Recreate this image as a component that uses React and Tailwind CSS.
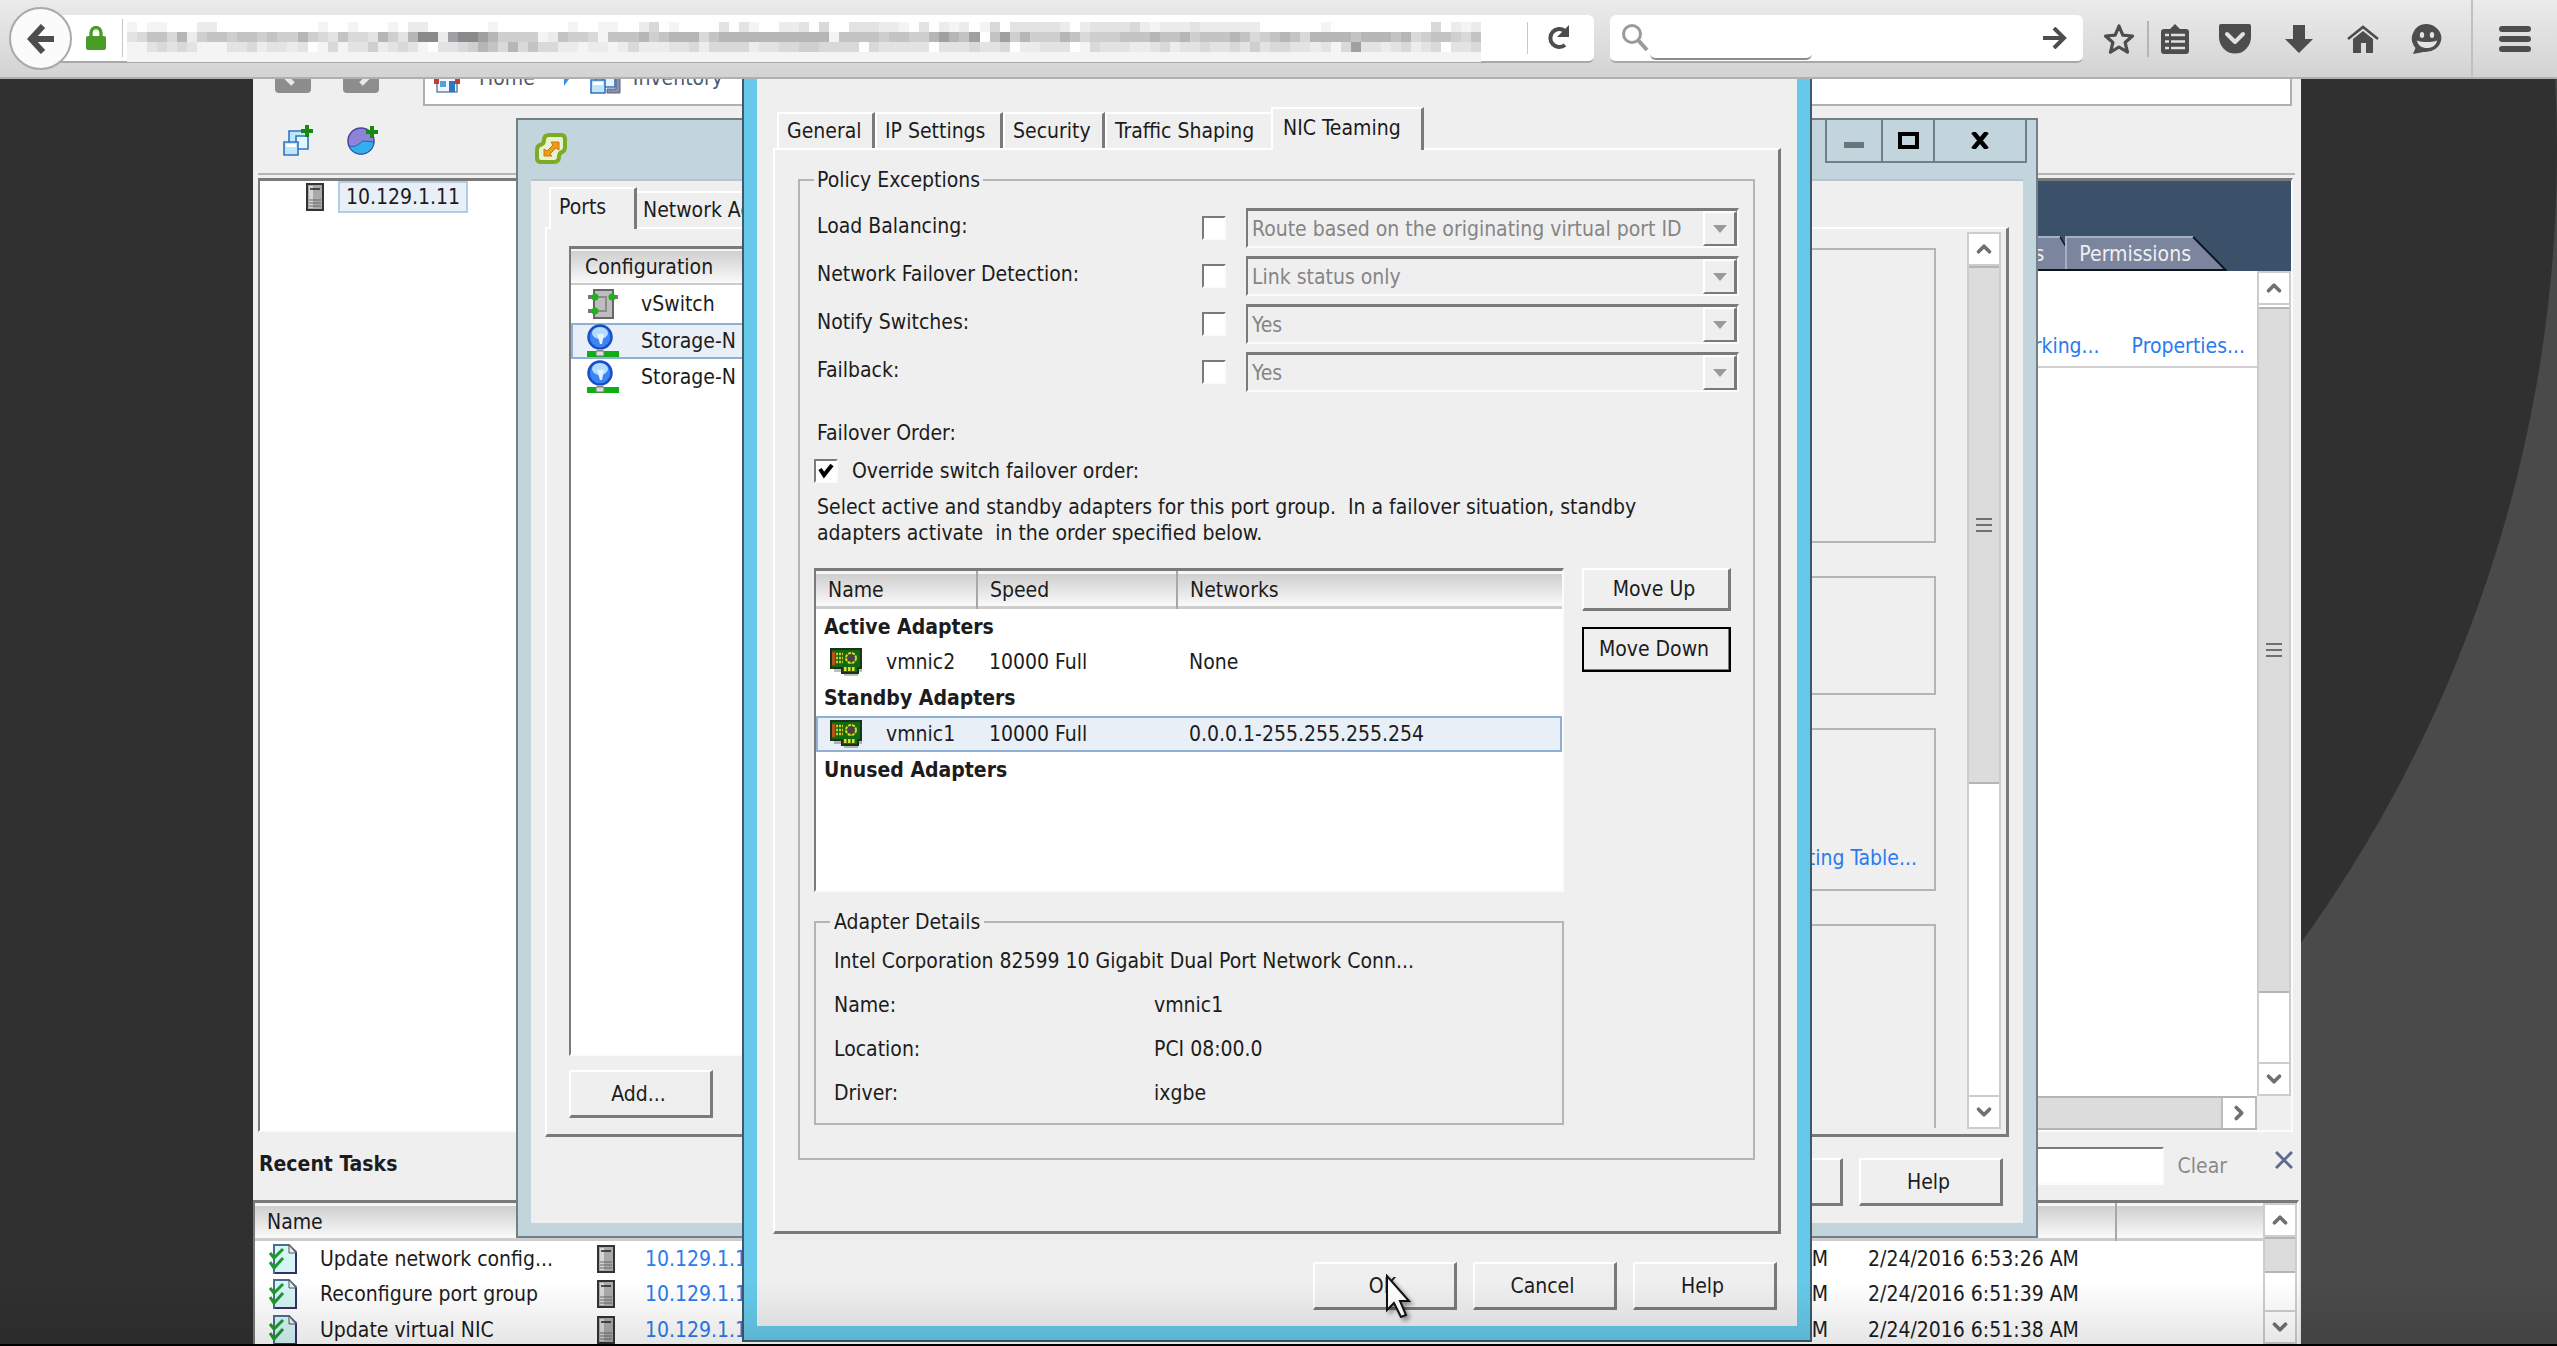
import { ChevronDown, ChevronRight, ChevronUp } from "lucide-react";
import clsx from "clsx";

const FONT = "font-['DejaVu_Sans_Condensed','Noto_Sans',sans-serif]";
const RAISED =
  "border-2 border-t-white border-l-white border-r-[#7a7a7a] border-b-[#7a7a7a]";
const SUNKEN =
  "border-2 border-t-[#7a7a7a] border-l-[#7a7a7a] border-r-[#fbfbfb] border-b-[#fbfbfb]";
const HEADER =
  "bg-linear-to-b from-[#cfcfcf] to-[#fafafa] border-t-2 border-t-[#f4f4f4] border-b-2 border-b-[#cccccc]";

const policies = [
  { id: "load", label: "Load Balancing:", value: "Route based on the originating virtual port ID" },
  { id: "detect", label: "Network Failover Detection:", value: "Link status only" },
  { id: "notify", label: "Notify Switches:", value: "Yes" },
  { id: "failback", label: "Failback:", value: "Yes" },
];

const adapterGroups = [
  { name: "Active Adapters", rows: [{ name: "vmnic2", speed: "10000 Full", networks: "None" }] },
  {
    name: "Standby Adapters",
    rows: [
      { name: "vmnic1", speed: "10000 Full", networks: "0.0.0.1-255.255.255.254", selected: true },
    ],
  },
  { name: "Unused Adapters", rows: [] },
];

const details = [
  ["Name:", "vmnic1"],
  ["Location:", "PCI 08:00.0"],
  ["Driver:", "ixgbe"],
];

const tasks = [
  { name: "Update network config...", time: "2/24/2016 6:53:26 AM" },
  { name: "Reconfigure port group", time: "2/24/2016 6:51:39 AM" },
  { name: "Update virtual NIC", time: "2/24/2016 6:51:38 AM" },
];

// One digit per cell of the hidden address, 0 is blank and 9 is darkest
const mosaic = [
  "101100022000000000010010001022000000100000001001100240100003031002230400333221030212014033333202333342122232222220000001000000000040212322333331",
  "346647256656656557543644375379928998755551265541666756777467777777777716666566557876806857555764555666766756667645676477776777674566546653766520",
  "113434311133423323014133523431033457647464422122124222334244442334455444404333330333433402233301433322342334334353443323148332342340334233343332",
];
const shades = ["#fefefe", "#f4f4f4", "#ececec", "#e3e3e3", "#d9d9d9", "#cfcfcf", "#c4c4c4", "#b6b6b6", "#a0a0a4", "#8a8a8a"];

function Mosaic() {
  return (
    <svg className="h-10 w-full" viewBox="0 0 135 4" preserveAspectRatio="none" shapeRendering="crispEdges">
      <rect y="3" width="135" height="1" fill="#f4f4f4" />
      {mosaic.map((row, y) =>
        row
          .slice(0, 135)
          .split("")
          .map((n, x) => <rect key={`${x}-${y}`} x={x} y={y} width="1" height="1" fill={shades[n]} />)
      )}
    </svg>
  );
}

function BrowserBar() {
  return (
    <header className="relative z-10 flex h-[79px] shrink-0 items-center border-b-2 border-[#b0b0b0] bg-linear-to-b from-[#ebebeb] to-[#d3d3d3]">
      <button
        type="button"
        aria-label="Back"
        className="z-10 ml-[9px] flex size-[63px] shrink-0 items-center justify-center rounded-full border-2 border-[#a9a9a9] bg-[#fbfbfb]"
      >
        <svg viewBox="0 0 28 30" className="h-[30px] w-7" fill="none" stroke="#4d4d4d" strokeWidth="6">
          <path d="M27 15H5M16 2 4 15l12 13" />
        </svg>
      </button>
      <div className="-ml-8 flex h-12 min-w-0 flex-1 items-center rounded-r-md border-b-2 border-[#a8a8a8] bg-white pl-[46px]">
        <svg viewBox="0 0 20 24" className="h-6 w-5 shrink-0">
          <path d="M5 11V7a5 5.500 0 0 1 10 0v4" fill="none" stroke="#4a9c27" strokeWidth="3.400" />
          <rect y="10" width="20" height="14" rx="2" fill="#4a9c27" />
        </svg>
        <div className="ml-4 h-[38px] w-px bg-[#c8c8c8]" />
        <div className="relative ml-1 mt-2 h-10 min-w-0 flex-1">
          <input aria-label="Address" className="absolute inset-0 size-full bg-transparent" />
          <Mosaic />
        </div>
        <div className="ml-[46px] h-8 w-px bg-[#c8c8c8]" />
        <button type="button" aria-label="Reload" className="mr-6 ml-[18px] shrink-0">
          <svg viewBox="0 0 24 26" className="h-[26px] w-6">
            <path d="M19 20a9 9 0 1 1 0-14" fill="none" stroke="#4d4d4d" strokeWidth="4" />
            <path d="M23 0v12H11z" fill="#4d4d4d" />
          </svg>
        </button>
      </div>
      <div className="relative ml-4 flex h-12 w-[473px] shrink-0 items-center justify-between rounded-md border-b-2 border-[#a8a8a8] bg-white pr-4 pl-3">
        <svg viewBox="0 0 28 28" className="size-7" fill="none" stroke="#9a9a9a" strokeWidth="3">
          <circle cx="10" cy="10" r="8.500" />
          <path d="m16 16 9 10" strokeWidth="4" />
        </svg>
        <input aria-label="Search" className="h-11 w-[162px] rounded-b-md border-b-2 border-[#8a8a8a]" />
        <div className="flex-1" />
        <svg viewBox="0 0 24 22" className="h-[22px] w-6" fill="none" stroke="#4d4d4d" strokeWidth="4">
          <path d="M0 11h20M11 1l10 10-10 10" />
        </svg>
      </div>
      <svg viewBox="0 0 32 32" className="ml-5 size-8 shrink-0" fill="none" stroke="#4d4d4d" strokeWidth="3.200" strokeLinejoin="round">
        <path d="m16 3 3.800 9.200 9.700.8-7.400 6.500 2.400 9.700L16 24l-8.500 5.200 2.400-9.700L2.500 13l9.700-.8z" />
      </svg>
      <div className="ml-3 h-9 w-0.5 shrink-0 bg-[#b5b5b5]" />
      <svg viewBox="0 0 28 30" className="ml-3 h-[30px] w-7 shrink-0">
        <path d="M3 5h6l5-5 5 5h6a3 3 0 0 1 3 3v19a3 3 0 0 1-3 3H3a3 3 0 0 1-3-3V8a3 3 0 0 1 3-3z" fill="#4d4d4d" />
        <path d="M4 11h4M4 17.500h4M4 24h4M10 11h14M10 17.500h14M10 24h14" stroke="#e0e0e0" strokeWidth="2.400" />
      </svg>
      <svg viewBox="0 0 32 30" className="ml-[30px] h-[30px] w-8 shrink-0">
        <path d="M2 0h28a2 2 0 0 1 2 2v11a16 16.500 0 0 1-32 0V2a2 2 0 0 1 2-2z" fill="#4d4d4d" />
        <path d="m8 10 8 8 8-8" fill="none" stroke="#e2e2e2" strokeWidth="4" strokeLinecap="round" strokeLinejoin="round" />
      </svg>
      <svg viewBox="0 0 28 28" className="ml-[34px] size-7 shrink-0" fill="#4d4d4d">
        <path d="M8 0h12v14h8L14 28 0 14h8z" />
      </svg>
      <svg viewBox="0 0 32 28" className="ml-[34px] h-7 w-8 shrink-0">
        <path d="M1 14 16 2l15 12" fill="none" stroke="#4d4d4d" strokeWidth="2.600" />
        <path d="M6 14 16 6l10 8v14h-7V18h-5v10H6z" fill="#4d4d4d" />
      </svg>
      <svg viewBox="0 0 32 32" className="ml-8 size-8 shrink-0">
        <path d="M16 1a16 14 0 1 1-3.500 28L2 31l2.500-6A14.500 14.500 0 0 1 16 1z" fill="#4d4d4d" />
        <ellipse cx="11" cy="12" rx="2.200" ry="3" fill="#e2e2e2" />
        <ellipse cx="21" cy="12" rx="2.200" ry="3" fill="#e2e2e2" />
        <path d="M6 17.500c6 2 14 2 20 0-1 10-19 10-20 0z" fill="#e2e2e2" />
      </svg>
      <div className="ml-7 h-full w-0.5 shrink-0 bg-[#c0c0c0]" />
      <button type="button" aria-label="Open menu" className="mx-[26px] flex w-8 shrink-0 flex-col gap-1">
        <span className="h-1.5 rounded-full bg-[#4d4d4d]" />
        <span className="h-1.5 rounded-full bg-[#4d4d4d]" />
        <span className="h-1.5 rounded-full bg-[#4d4d4d]" />
      </button>
    </header>
  );
}

function ServerIcon({ className }) {
  return (
    <svg viewBox="0 0 18 28" className={clsx("h-7 w-[18px] shrink-0", className)}>
      <rect x="1" y="1" width="16" height="26" fill="#a9a9a9" stroke="#333" strokeWidth="2" />
      <path d="M3 3h4v22H3z" fill="#d6d6d6" />
      <path d="M4 6h10" stroke="#222" strokeWidth="1.500" />
      <path d="M3 17h12M3 20h12M3 23h12" stroke="#666" />
    </svg>
  );
}

function TaskIcon() {
  return (
    <svg viewBox="0 0 28 30" className="h-[30px] w-7 shrink-0">
      <path d="M5 1h15l7 7v21H5z" fill="#d5f6f6" stroke="#4c6c92" strokeWidth="2" />
      <path d="M27 9v20H6" fill="none" stroke="#35306a" strokeWidth="2" />
      <path d="M20 1v8h7z" fill="#eee" stroke="#555" />
      <path d="m1 9 4 5 9-9M1 18l4 6 9-10" fill="none" stroke="#1d9a2c" strokeWidth="3" />
    </svg>
  );
}

function CubesIcon({ plus }) {
  return (
    <svg viewBox="0 0 32 34" className="h-[34px] w-8 shrink-0">
      <g fill="#bfe6fb" stroke="#2f74c4" strokeWidth="1.600">
        <path d="M7 8h18v16H7z" />
        <path d="M14 13h12v13H14z" fill="#e3f5ff" />
        <path d="M2 19h14v13H2z" />
      </g>
      <path d="M4 21h10v3H4z" fill="#fff" />
      {plus && <path d="M25 2v12M19 8h12" stroke="#118c11" strokeWidth="4" />}
      {!plus && <path d="M27 8h4v24H18v-4h9z" fill="#8a8fa8" stroke="#5c6180" />}
    </svg>
  );
}

function PoolIcon() {
  return (
    <svg viewBox="0 0 32 32" className="size-8 shrink-0">
      <circle cx="15" cy="17" r="13" fill="#8d84d8" stroke="#4a469a" strokeWidth="1.500" />
      <path d="M3 22c6 2 10-2 14-5l11 1a13 13 0 0 1-25 4z" fill="#35aef0" stroke="#1d63b5" />
      <path d="M26 2v12M20 8h12" stroke="#118c11" strokeWidth="4" />
    </svg>
  );
}

function SwitchIcon() {
  return (
    <svg viewBox="0 0 32 32" className="size-8 shrink-0">
      <rect x="7" y="2" width="19" height="28" fill="#bdbdbd" stroke="#666" strokeWidth="2" />
      <path d="M1 9h8M24 9h7M1 23h8" stroke="#777" strokeWidth="4" />
      <path d="M11 9h8v14h-8" fill="none" stroke="#8b8b8b" strokeWidth="2" />
      <circle cx="8" cy="9" r="3.500" fill="#20b020" />
      <circle cx="25" cy="9" r="3.500" fill="#20b020" />
      <circle cx="8" cy="23" r="3.500" fill="#20b020" />
    </svg>
  );
}

function PortIcon() {
  return (
    <svg viewBox="0 0 32 34" className="h-[34px] w-8 shrink-0">
      <circle cx="13" cy="13" r="11.500" fill="#3b86f4" stroke="#1a4fc4" strokeWidth="2.500" />
      <ellipse cx="13" cy="9" rx="8" ry="6" fill="#b4dcff" />
      <path d="M10 10h7l-2 10h-2z" fill="#e4f3ff" />
      <path d="M10 25h6v4h-6z" fill="#999" />
      <path d="M0 27h32v6H0z" fill="#0fae18" />
      <path d="M9 27h8v5H9z" fill="#dcdcdc" stroke="#777" />
    </svg>
  );
}

function NicIcon() {
  return (
    <svg viewBox="0 0 32 28" className="h-7 w-8 shrink-0">
      <path d="M4 4h28v20h-4v4H14v-4H4z" fill="#000" opacity=".25" />
      <path d="M1 1h30v19h-3v5H12v-5H1z" fill="#0f6a12" stroke="#1b331b" strokeWidth="2" />
      <path d="M2 4h3v13H2z" fill="#b5541c" />
      <path d="M6 6h7M6 10h7M6 14h7" stroke="#d6c828" strokeWidth="2.400" strokeDasharray="2 1" />
      <circle cx="21" cy="10" r="5" fill="#444" stroke="#d6d82c" strokeWidth="2" strokeDasharray="3 1" />
      <path d="M14 21h11" stroke="#dfe02c" strokeWidth="4" strokeDasharray="2.500 1.500" />
    </svg>
  );
}

function VmwareIcon() {
  return (
    <svg viewBox="0 0 32 32" className="size-8 shrink-0">
      <path d="M14 3h12q4 0 4 4v8q0 4-3 5-3 1-3 5 0 5-5 5H6q-4 0-4-4v-8q0-4 3-5 4-1 4-5 0-5 5-5z" fill="#e9f2cf" stroke="#7cac26" strokeWidth="4" />
      <path d="M9 24v-7l3 2 6-6-2-3h8v8l-3-2-6 6 2 2z" fill="#f09a1c" stroke="#c9780c" />
    </svg>
  );
}

function HomeIcon() {
  return (
    <svg viewBox="0 0 28 30" className="h-[30px] w-7 shrink-0">
      <path d="M4 14h20v15H4z" fill="#f3f6fa" stroke="#6a87a8" strokeWidth="1.500" />
      <path d="m1 15 13-13 13 13z" fill="#c93a32" />
      <path d="M1 11h5v10H1zM22 11h5v10h-5z" fill="#c93a32" />
      <path d="M7 18h6v6H7z" fill="#4ea3e8" />
      <path d="M16 18h6v11h-6z" fill="#2d77c2" />
    </svg>
  );
}

function WinButton({ children, className, ...props }) {
  return (
    <button
      type="button"
      className={clsx("flex h-12 w-36 items-center justify-center bg-[#efefef] pr-1", RAISED, "border-r-3 border-b-3", className)}
      {...props}
    >
      {children}
    </button>
  );
}

function ScrollBar({ thumb, grip, className }) {
  return (
    <div className={clsx("flex w-[34px] shrink-0 flex-col border-x-2 border-[#cdcdcd] bg-white", className)}>
      <div className="flex h-[34px] shrink-0 items-center justify-center border-y-2 border-[#cdcdcd]">
        <ChevronUp size={22} strokeWidth={4} color="#707070" />
      </div>
      <div className={clsx("flex flex-col items-center justify-center gap-1 border-y-2 border-[#b5b5b5] bg-[#dcdcdc]", thumb)}>
        {grip && [0, 1, 2].map((n) => <span key={n} className="h-0.5 w-4 bg-[#707070]" />)}
      </div>
      <div className="flex-1" />
      <div className="flex h-[34px] shrink-0 items-center justify-center border-y-2 border-[#cdcdcd]">
        <ChevronDown size={22} strokeWidth={4} color="#707070" />
      </div>
    </div>
  );
}

function SlantTab({ children }) {
  return (
    <button type="button" className="relative -mr-[15px] h-[35px] pr-9 pl-[14px] text-[#f0f0f0]">
      <svg viewBox="0 0 164 35" preserveAspectRatio="none" className="absolute inset-0 size-full">
        <path d="M0 0h130l34 35H0z" fill="#7b869e" />
        <path d="M1 35V1h129" fill="none" stroke="#a7b1c2" strokeWidth="2" />
        <path d="m130 1 33 33H0" fill="none" stroke="#10151c" strokeWidth="2" />
      </svg>
      <span className="relative">{children}</span>
    </button>
  );
}

function Client() {
  return (
    <div className="flex h-full flex-col bg-[#efefef]">
      <nav className="flex h-[27px] shrink-0 items-end overflow-hidden pr-[9px] pl-[22px]">
        <div className="flex h-[50px] w-full shrink-0 items-center">
          <button type="button" aria-label="Back" className="mb-3 size-9 rounded bg-[#8d8d8d]">
            <svg viewBox="0 0 36 36" fill="none" stroke="#e9e9e9" strokeWidth="5">
              <path d="M30 17H9M18 8 8 17l10 10" />
            </svg>
          </button>
          <button type="button" aria-label="Forward" className="mb-3 ml-8 size-9 rounded bg-[#8d8d8d]">
            <svg viewBox="0 0 36 36" fill="none" stroke="#e9e9e9" strokeWidth="5">
              <path d="M6 17h21M18 8l10 9-10 10" />
            </svg>
          </button>
          <div className="ml-11 flex h-full flex-1 items-center border-2 border-[#b0b0b0] bg-white pb-1.5 pl-2 text-[#4b5a72]">
            <HomeIcon />
            <a href="#home" className="ml-[18px]">Home</a>
            <svg viewBox="0 0 10 18" className="mr-4 ml-7 h-[18px] w-2.5">
              <path d="M1 0v17l8-11z" fill="#3a92f0" />
            </svg>
            <CubesIcon />
            <a href="#inventory" className="ml-3">Inventory</a>
          </div>
        </div>
      </nav>
      <div className="ml-[5px] mr-[6px] flex h-[69px] shrink-0 items-center gap-8 border-b-2 border-[#b5b5b5] pl-6">
        <CubesIcon plus />
        <PoolIcon />
      </div>

      <div className="mt-[3px] mr-2 ml-[5px] flex min-h-0 flex-1">
        <div className={clsx("w-[400px] border-t-3 bg-white pl-[46px]", SUNKEN)}>
          <div className="flex items-center gap-3.5">
            <ServerIcon />
            <span className="flex h-8 items-center border-2 border-[#b5cbe4] bg-[#e9eff7] px-1.5">10.129.1.11</span>
          </div>
        </div>
        <div className={clsx("flex min-w-0 flex-1 flex-col border-t-3", SUNKEN)}>
          <div className="flex h-[90px] shrink-0 items-end justify-end bg-[#3b5069] pr-[79px]">
            <SlantTab>Maps</SlantTab>
            <SlantTab>Permissions</SlantTab>
          </div>
          <div className="flex min-h-0 flex-1">
            <div className="flex flex-1 flex-col bg-white">
              <div className="flex h-[97px] items-end justify-end gap-8 border-b-2 border-[#cfcfcf] pr-3 pb-[7px] text-[#2a7af0]">
                <a href="#networking">Add Networking...</a>
                <a href="#properties">Properties...</a>
              </div>
              <div className="flex-1" />
              <div className="flex h-[34px] justify-end border-y-2 border-[#b5b5b5] bg-[#dcdcdc]">
                <div className="flex w-9 items-center justify-center border-x-2 border-[#bdbdbd] bg-white">
                  <ChevronRight size={22} strokeWidth={4} color="#707070" />
                </div>
              </div>
            </div>
            <ScrollBar grip thumb="mt-0.5 h-[686px]" className="mb-[34px]" />
          </div>
        </div>
      </div>

      <div className="flex h-[68px] shrink-0 items-center pr-2 pl-1.5">
        <h2 className="flex-1 pb-1 font-bold">Recent Tasks</h2>
        <input aria-label="Filter tasks" className={clsx("h-[38px] w-[400px] bg-white", SUNKEN)} />
        <button type="button" className="ml-[14px] text-[#8a8a8a]">Clear</button>
        <button type="button" aria-label="Close" className="mb-3 ml-12">
          <svg viewBox="0 0 18 18" className="size-[18px]" stroke="#5e6b8a" strokeWidth="3">
            <path d="m1 1 16 16M17 1 1 17" />
          </svg>
        </button>
      </div>

      <div className={clsx("mr-0.5 flex h-[146px] shrink-0 overflow-hidden bg-white", SUNKEN, "border-t-3")}>
        <table className="w-full table-fixed self-start text-left">
          <thead className={HEADER}>
            <tr className="h-9">
              <th className="w-[334px] pl-3 font-normal">Name</th>
              <th className="w-[300px]" />
              <th />
              <th className="w-[260px] border-r-2 border-[#a8a8a8]" />
              <th className="w-[147px]" />
            </tr>
          </thead>
          <tbody>
            {tasks.map((task) => (
              <tr key={task.time} className="h-9">
                <td className="pl-3.5">
                  <span className="flex items-center gap-[23px] whitespace-nowrap">
                    <TaskIcon />
                    {task.name}
                  </span>
                </td>
                <td className="pl-2">
                  <span className="flex items-center gap-[30px]">
                    <ServerIcon />
                    <a href="#host" className="text-[#2a7af0]">10.129.1.11</a>
                  </span>
                </td>
                <td className="pr-7 text-right">{task.time.slice(-2)}</td>
                <td className="pl-3 whitespace-nowrap">{task.time}</td>
                <td />
              </tr>
            ))}
          </tbody>
        </table>
        <ScrollBar thumb="h-9" />
      </div>
    </div>
  );
}

function SwitchWindow() {
  return (
    <section className="absolute inset-x-[263px] top-[39px] flex h-[1120px] flex-col border-2 border-[#737f87] bg-[#c3d5dc] px-[13px] pb-[13px]">
      <div className="flex h-[59px] shrink-0 items-start justify-between pl-1">
        <div className="mt-3">
          <VmwareIcon />
        </div>
        <div className="-mr-1 flex h-[43px] border-x-2 border-b-2 border-[#737f87]">
          <button type="button" aria-label="Minimize" className="flex w-14 items-center justify-center border-r-2 border-[#737f87] pt-2">
            <span className="h-1.5 w-5 bg-[#68757b]" />
          </button>
          <button type="button" aria-label="Maximize" className="flex w-[52px] items-center justify-center border-r-2 border-[#737f87]">
            <span className="h-[17px] w-[21px] border-4 border-black" />
          </button>
          <button type="button" aria-label="Close" className="flex w-[90px] items-center justify-center">
            <svg viewBox="0 0 18 17" className="h-[17px] w-[18px]" stroke="#000" strokeWidth="4.500">
              <path d="m2 0 14 17M16 0 2 17" />
            </svg>
          </button>
        </div>
      </div>

      <div className="flex min-h-0 flex-1 flex-col border-t-2 border-[#b7c6cc] bg-[#efefef] px-[14px] pb-[17px]">
        <div className="flex h-[46px] shrink-0 items-end pl-1">
          <button type="button" className="z-10 -mb-0.5 flex h-[42px] w-[88px] items-center border-t-2 border-r-3 border-l-2 border-t-white border-r-[#7a7a7a] border-l-white bg-[#efefef] pb-1 pl-2">
            Ports
          </button>
          <button type="button" className="flex h-9 items-center border-t-2 border-r-3 border-t-white border-r-[#7a7a7a] px-1.5">
            Network Adapters
          </button>
        </div>
        <div className={clsx("flex min-h-0 flex-1", RAISED, "border-r-3 border-b-3")}>
          <div className="flex w-[440px] flex-col pt-[17px] pb-4 pl-[22px]">
            <div className={clsx("flex-1 bg-white", SUNKEN, "border-t-3")}>
              <div className={clsx("flex h-9 items-center pl-3.5", HEADER)}>Configuration</div>
              <ul>
                <li className="flex h-[38px] items-center gap-[22px] pl-4">
                  <SwitchIcon />
                  vSwitch
                </li>
                <li className="flex h-9 items-center gap-[22px] border-2 border-[#8fb0d4] bg-[#e9eff7] pl-3.5">
                  <PortIcon />
                  Storage-N
                </li>
                <li className="flex h-9 items-center gap-[22px] pl-4">
                  <PortIcon />
                  Storage-N
                </li>
              </ul>
            </div>
            <WinButton className="mt-3.5">Add...</WinButton>
          </div>
          <div className="ml-6 flex flex-1 flex-col gap-[33px] pt-[19px] pb-1.5">
            <div className="h-[295px] border-2 border-[#b5b5b5]" />
            <div className="h-[119px] border-2 border-[#b5b5b5]" />
            <div className="flex h-[163px] items-end justify-end border-2 border-[#b5b5b5] pr-[17px] pb-[18px]">
              <a href="#routing" className="text-[#2a7af0]">Routing Table...</a>
            </div>
            <div className="flex-1 border-2 border-b-0 border-[#b5b5b5]" />
          </div>
          <ScrollBar grip thumb="h-[518px]" className="mt-[3px] mr-[5px] mb-[5px] ml-[31px]" />
        </div>
        <div className="mt-[21px] flex justify-end gap-4 pr-1.5">
          <WinButton>Close</WinButton>
          <WinButton>Help</WinButton>
        </div>
      </div>
    </section>
  );
}

function CheckBox({ id, checked, label }) {
  return (
    <span className="relative flex size-6 shrink-0">
      <input
        id={id}
        type="checkbox"
        aria-label={label}
        defaultChecked={checked}
        className={clsx("peer size-6 appearance-none bg-white", SUNKEN)}
      />
      <svg viewBox="0 0 24 24" className="pointer-events-none invisible absolute inset-0 size-6 peer-checked:visible" fill="none" stroke="#000" strokeWidth="4">
        <path d="m6 10 4 6 8-10" />
      </svg>
    </span>
  );
}

function PolicyRow({ id, label, value }) {
  return (
    <div className="flex h-12 items-center">
      <label htmlFor={id} className="w-[385px] shrink-0 pb-1">{label}</label>
      <CheckBox label={`Override ${label}`} />
      <div className="relative ml-5 min-w-0 flex-1">
        <select id={id} disabled className={clsx("h-10 w-full appearance-none pl-1 text-[#858585] opacity-100", SUNKEN, "border-t-3 border-r-2")}>
          <option>{value}</option>
        </select>
        <span className={clsx("pointer-events-none absolute top-[3px] right-0.5 flex h-[35px] w-[34px] items-center justify-center bg-[#efefef]", RAISED, "border-r-3")}>
          <svg viewBox="0 0 14 8" className="h-2 w-3.5">
            <path d="M0 0h14L7 8z" fill="#9a9a9a" />
          </svg>
        </span>
      </div>
    </div>
  );
}

function AdapterTable() {
  return (
    <div className={clsx("h-[324px] w-[750px] shrink-0 bg-white", SUNKEN, "border-t-3")}>
      <table className="w-full table-fixed text-left">
        <thead className={HEADER}>
          <tr className="h-9">
            <th className="w-[161px] border-r-2 border-[#a8a8a8] pl-3 font-normal">Name</th>
            <th className="w-[200px] border-r-2 border-[#a8a8a8] pl-3 font-normal">Speed</th>
            <th className="pl-3 font-normal">Networks</th>
          </tr>
        </thead>
        {adapterGroups.map((group) => (
          <tbody key={group.name}>
            <tr className="h-9">
              <th colSpan={3} className="pl-2 font-bold">{group.name}</th>
            </tr>
            {group.rows.map((row) => (
              <tr
                key={row.name}
                className={clsx("h-9", row.selected && "bg-[#e9eff7] outline-2 -outline-offset-2 outline-[#8fb0d4]")}
              >
                <td className="pl-3.5">
                  <span className="flex items-center gap-6">
                    <NicIcon />
                    {row.name}
                  </span>
                </td>
                <td className="pl-3">{row.speed}</td>
                <td className="pl-3">{row.networks}</td>
              </tr>
            ))}
          </tbody>
        ))}
      </table>
    </div>
  );
}

function TeamingDialog() {
  const tab = "flex h-9 items-center border-t-2 border-l-2 border-t-white border-l-white";
  return (
    <section className="absolute inset-x-[489px] top-0 border-x-2 border-b-2 border-[#3f5a66]">
      <div className="border-x-[13px] border-b-[14px] border-[#66c9e9] bg-[#efefef] px-4 pt-7 pb-4">
        <div className="flex items-end pl-1">
          <button type="button" className={clsx(tab, "w-[98px] border-r-3 border-r-[#7a7a7a] pl-2")}>General</button>
          <button type="button" className={clsx(tab, "w-[128px] border-r-3 border-r-[#7a7a7a] pl-2")}>IP Settings</button>
          <button type="button" className={clsx(tab, "w-[102px] border-r-3 border-r-[#7a7a7a] pl-2")}>Security</button>
          <button type="button" className={clsx(tab, "w-[166px] pl-2")}>Traffic Shaping</button>
          <button type="button" className={clsx(tab, "z-10 -mb-0.5 h-[43px] w-[153px] border-r-3 border-r-[#7a7a7a] bg-[#efefef] pb-1 pl-2.5")}>
            NIC Teaming
          </button>
        </div>

        <div className={clsx("px-[23px] pt-[17px] pb-[71px]", RAISED, "border-r-3 border-b-3")}>
          <fieldset className="min-w-0 border-2 border-[#b5b5b5] pr-3.5 pb-[33px] pl-3.5">
            <legend className="px-[3px]">Policy Exceptions</legend>
            <div className="pt-[11px] pl-[3px]">
              {policies.map((policy) => (
                <PolicyRow key={policy.id} {...policy} />
              ))}
            </div>

            <p className="mt-6 pl-[3px]">Failover Order:</p>
            <div className="mt-3 flex h-[26px] items-center gap-3.5">
              <CheckBox id="override" checked />
              <label htmlFor="override">Override switch failover order:</label>
            </div>
            <p className="mt-2.5 pl-[3px]">
              Select active and standby adapters for this port group.&nbsp; In a failover situation, standby
              <br />
              adapters activate&nbsp; in the order specified below.
            </p>

            <div className="mt-[22px] mr-2 flex gap-[18px]">
              <AdapterTable />
              <div className="flex flex-1 flex-col gap-4">
                <WinButton className="h-[43px] w-full">Move Up</WinButton>
                <WinButton className="h-[45px] w-full outline-2 -outline-offset-2 outline-black">Move Down</WinButton>
              </div>
            </div>

            <fieldset className="mt-[17px] w-[750px] border-2 border-[#b5b5b5] pr-4 pb-2 pl-3.5">
              <legend className="px-1">Adapter Details</legend>
              <p className="flex h-12 items-center pt-1 pl-1">
                Intel Corporation 82599 10 Gigabit Dual Port Network Conn...
              </p>
              <dl className="pl-1">
                {details.map(([term, value]) => (
                  <div key={term} className="flex h-11 items-center">
                    <dt className="w-80">{term}</dt>
                    <dd>{value}</dd>
                  </div>
                ))}
              </dl>
            </fieldset>
          </fieldset>
        </div>

        <div className="mt-7 flex justify-end gap-4 pr-1">
          <div className="relative">
            <WinButton>OK</WinButton>
            <svg viewBox="0 0 26 44" className="absolute top-3 left-[73px] h-11 w-[26px] drop-shadow-[3px_3px_2px_rgba(0,0,0,0.4)]">
              <path d="M1 2v34l7-7 7 14 5-2-6-14h9z" fill="#fff" stroke="#111" strokeWidth="2" />
            </svg>
          </div>
          <WinButton>Cancel</WinButton>
          <WinButton>Help</WinButton>
        </div>
      </div>
    </section>
  );
}

export default function App() {
  return (
    <div className={clsx("flex h-screen flex-col overflow-hidden bg-[#4a4a4a] text-[21px] leading-[26px] text-[#1c1c1c]", FONT)}>
      <BrowserBar />
      <main className="relative min-h-0 flex-1 overflow-hidden">
        <div className="absolute inset-y-0 left-0 w-1/2 bg-[#303030]" />
        <div className="absolute -top-[1285px] right-0 size-[2712px] rounded-full bg-[#303030]" />
        <div className="relative mr-64 ml-[253px] h-full">
          <Client />
          <SwitchWindow />
          <TeamingDialog />
        </div>
        <div className="pointer-events-none absolute inset-x-0 bottom-0 h-16 border-b-2 border-black bg-linear-to-b from-transparent to-black/10" />
      </main>
    </div>
  );
}
